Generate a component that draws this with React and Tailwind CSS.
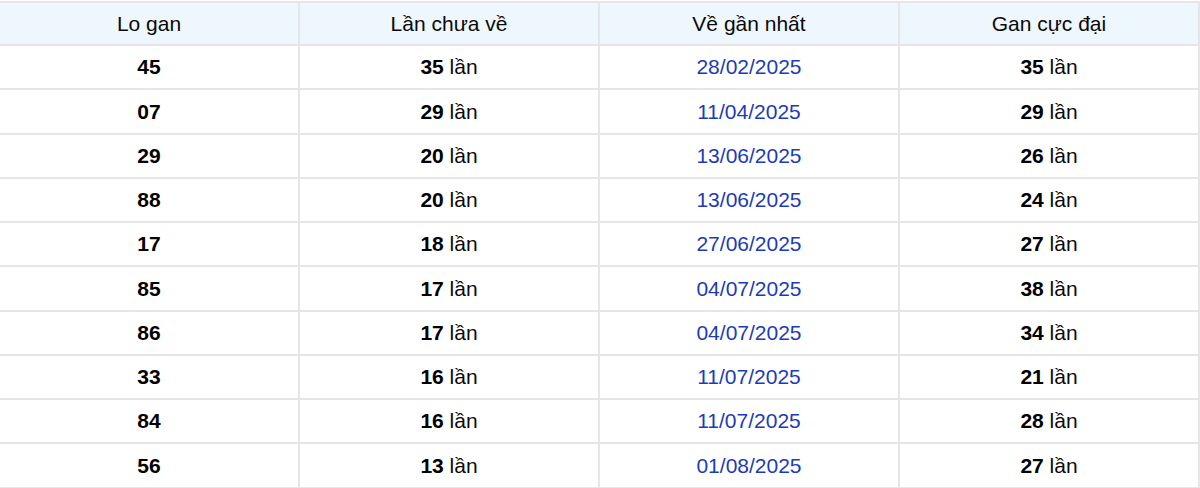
const rows = [
  ['45', '35', '28/02/2025', '35'],
  ['07', '29', '11/04/2025', '29'],
  ['29', '20', '13/06/2025', '26'],
  ['88', '20', '13/06/2025', '24'],
  ['17', '18', '27/06/2025', '27'],
  ['85', '17', '04/07/2025', '38'],
  ['86', '17', '04/07/2025', '34'],
  ['33', '16', '11/07/2025', '21'],
  ['84', '16', '11/07/2025', '28'],
  ['56', '13', '01/08/2025', '27'],
];

const App = () => {
  return (
    <div className="w-[1200px] h-[488px] overflow-hidden bg-white pt-px">
      <table
        className="w-[1201px] -ml-[2px] border-collapse table-fixed text-[21px] text-[#0a0a0a]"
        style={{ fontFamily: '"Liberation Sans", Arial, sans-serif' }}
      >
        <thead>
          <tr className="bg-[#eef6fe] h-[43px]">
            {['Lo gan', 'Lần chưa về', 'Về gần nhất', 'Gan cực đại'].map((h) => (
              <th key={h} className="w-[300px] border-2 border-[#e6e6ea] font-normal text-center align-middle">
                {h}
              </th>
            ))}
          </tr>
        </thead>
        <tbody>
          {rows.map((r) => (
            <tr key={r[0]} className="h-[44.25px]">
              <td className="border-2 border-[#e6e6ea] text-center font-bold text-black">{r[0]}</td>
              <td className="border-2 border-[#e6e6ea] text-center">
                <b className="text-black">{r[1]}</b> lần
              </td>
              <td className="border-2 border-[#e6e6ea] text-center text-[#1c3bb8]">{r[2]}</td>
              <td className="border-2 border-[#e6e6ea] text-center">
                <b className="text-black">{r[3]}</b> lần
              </td>
            </tr>
          ))}
        </tbody>
      </table>
    </div>
  );
};

export default App;
